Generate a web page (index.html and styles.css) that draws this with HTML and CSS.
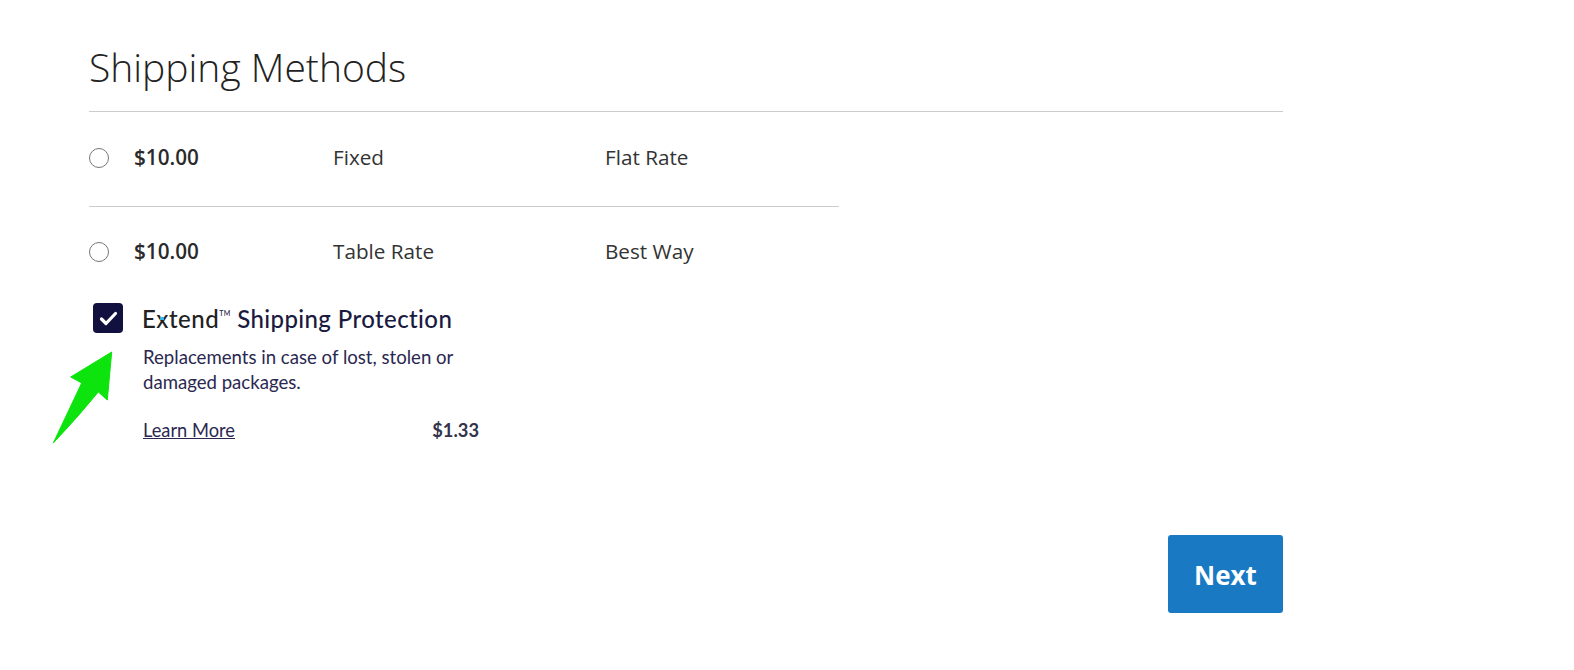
FILE: index.html
```html
<!DOCTYPE html>
<html lang="en">
<head>
<meta charset="utf-8">
<title>Shipping Methods</title>
<link rel="stylesheet" href="styles.css">
</head>
<body>
<main class="page">
  <h1 class="title">Shipping Methods</h1>
  <div class="methods">
    <div class="method">
      <span class="radio"></span>
      <span class="price">$10.00</span>
      <span class="carrier">Fixed</span>
      <span class="name">Flat Rate</span>
    </div>
    <div class="method method-last">
      <span class="radio"></span>
      <span class="price">$10.00</span>
      <span class="carrier">Table Rate</span>
      <span class="name">Best Way</span>
    </div>
  </div>
  <section class="extend">
    <div class="check">
      <svg width="19" height="15" viewBox="0 0 19 15"><path d="M2.5 8 L7 12.5 L16.5 2.5" fill="none" stroke="#fff" stroke-width="3.2" stroke-linecap="round" stroke-linejoin="round"/></svg>
    </div>
    <div class="extend-body">
      <div class="extend-title"><span class="brand">E<span class="x">x</span>tend</span><sup class="tm">TM</sup> Shipping Protection</div>
      <p class="extend-text">Replacements in case of lost, stolen or<br>damaged packages.</p>
      <div class="extend-foot">
        <a class="learn" href="#">Learn More</a>
        <span class="cost">$1.33</span>
      </div>
    </div>
    <svg class="arrow" width="65" height="100" viewBox="50 345 65 100"><path d="M111.7 352 L70.7 377 L81.7 383 L53.3 443 Q78 417 98.3 392 L107.3 400 Z" fill="#0de40d" stroke="#0de40d" stroke-width="1" stroke-linejoin="round"/></svg>
  </section>
  <div class="actions"><button class="next" type="button">Next</button></div>
</main>
</body>
</html>
```
FILE: styles.css
```css
* { box-sizing: border-box; }
html, body { margin: 0; padding: 0; background: #fff; }
body { font-family: "Open Sans", sans-serif; color: #333; overflow: hidden; }
.page { width: 1283px; height: 670px; padding: 38px 0 0 89px; }
.title {
  margin: 0;
  height: 74px;
  font-size: 39px;
  line-height: 58px;
  font-weight: 300;
  color: #222;
  border-bottom: 1px solid #ccc;
}
.methods { width: 750px; }
.method {
  display: flex;
  align-items: center;
  height: 95px;
  padding-bottom: 3px;
  font-size: 20.7px;
  border-bottom: 1px solid #ccc;
}
.method-last { height: 94px; padding-bottom: 5px; border-bottom: 0; }
.radio {
  width: 20px;
  height: 20px;
  border: 1px solid #777;
  border-radius: 50%;
  margin-right: 25px;
  flex: none;
}
.price { width: 199px; margin-bottom: 2px; font-weight: 600; color: #2a2a2a; }
.carrier { width: 272px; margin-bottom: 2px; }
.name { margin-bottom: 2px; }
.extend {
  position: relative;
  display: flex;
  margin-top: -3px;
  padding-left: 4px;
  font-family: "Lato", sans-serif;
  color: #2a2850;
}
.check {
  width: 30px;
  height: 30px;
  margin-top: 5px;
  margin-right: 20px;
  background: #12103f;
  border-radius: 4px;
  display: flex;
  align-items: center;
  justify-content: center;
  flex: none;
}
.extend-body { width: 336px; }
.extend-title { margin-top: 2px; margin-left: -1px; font-size: 24px; line-height: 38px; font-weight: 500; white-space: nowrap; letter-spacing: .4px; color: #1a1a40; }
.brand { color: #222; font-weight: 500; letter-spacing: .5px; }
.x { position: relative; color: #222; }
.x::after {
  content: "";
  position: absolute;
  left: 4px;
  top: 13px;
  width: 4px;
  height: 3px;
  background: #35b5e8;
}
.tm { font-size: 7px; vertical-align: 12px; line-height: 0; }
.extend-text { margin: 7px 0 0; font-size: 18.6px; line-height: 24.5px; }
.extend-foot { display: flex; justify-content: space-between; margin-top: 24px; font-size: 18.3px; line-height: 24px; }
.learn { color: #2a2850; text-decoration: underline; }
.cost { font-weight: 700; color: #33334a; }
.arrow { position: absolute; left: -39px; top: 47px; }
.actions { display: flex; justify-content: flex-end; margin-top: 93px; }
.next {
  width: 115px;
  height: 78px;
  border: 0;
  padding: 2px 0 0;
  border-radius: 3px;
  background: #1979c3;
  color: #fff;
  font-family: "Open Sans", sans-serif;
  font-size: 26px;
  font-weight: 700;
}
```
